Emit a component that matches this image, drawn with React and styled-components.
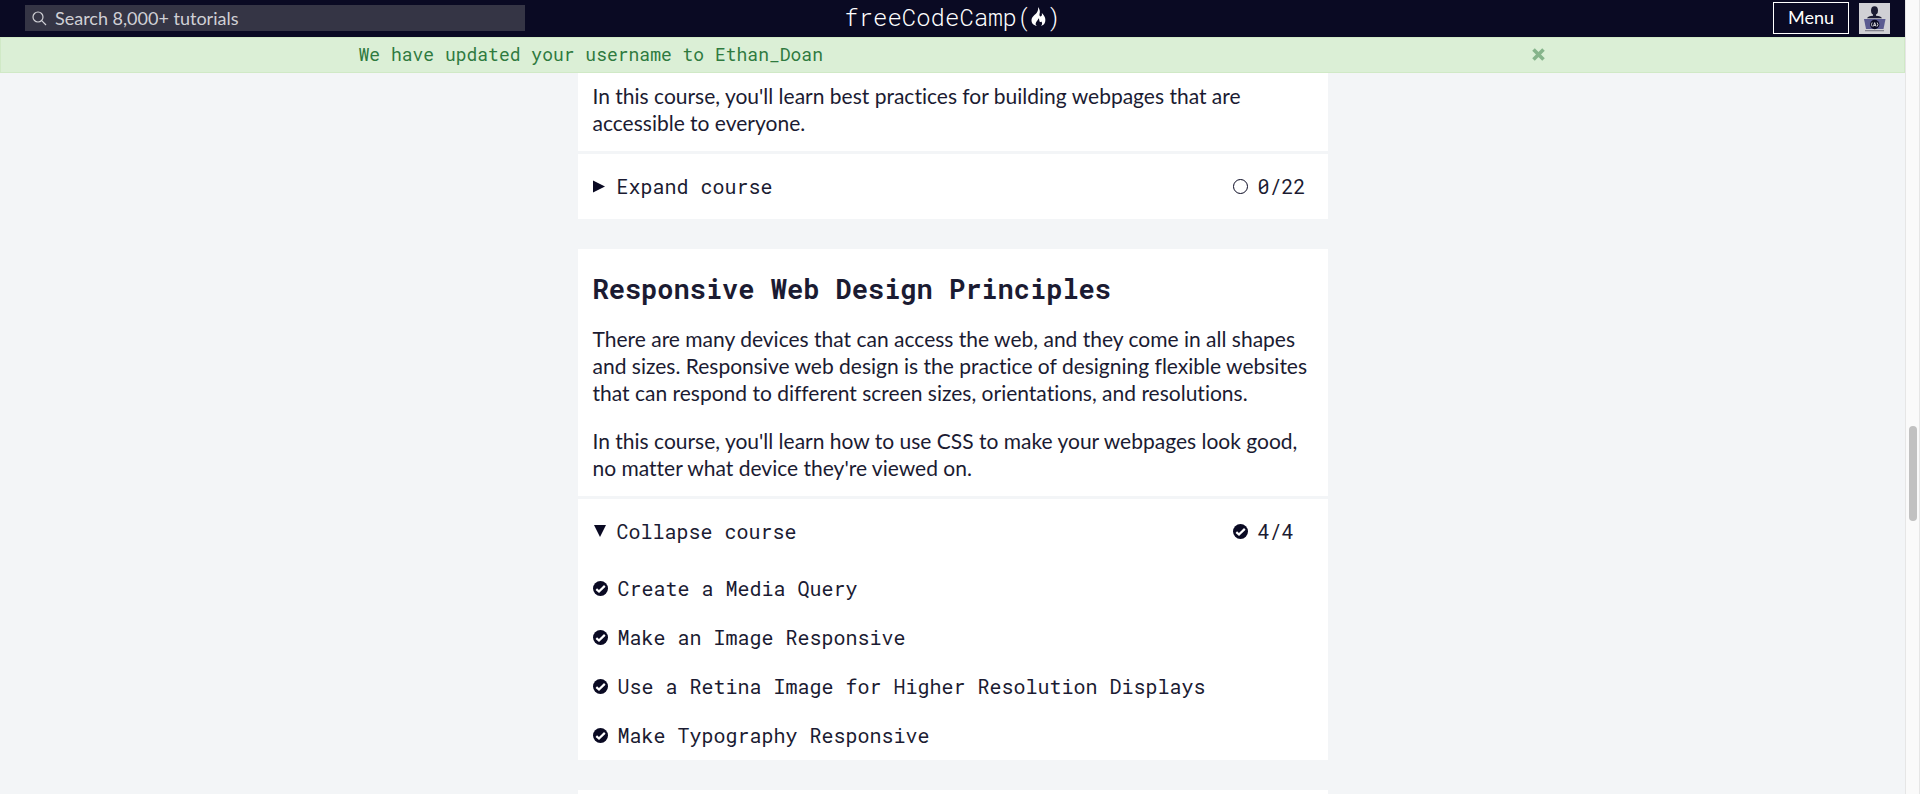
import React, { useState } from "react";
import styled, { createGlobalStyle } from "styled-components";

const mono = '"Roboto Mono", "DejaVu Sans Mono", monospace';
const sans = 'Lato, "Liberation Sans", sans-serif';

const GlobalStyle = createGlobalStyle`
  *, *::before, *::after { box-sizing: border-box; }
  html, body, #root { height: 100%; }
  body {
    margin: 0;
    overflow: hidden;
    background: #f3f5f7;
    color: #1b1b32;
    font: 20px/27px ${sans};
  }
  button, input { font: inherit; }
`;

const Window = styled.div`
  display: flex;
  height: 100vh;
`;

const Page = styled.div`
  flex: 1;
  min-width: 0;
  overflow: hidden;
`;

const ScrollTrack = styled.div`
  flex: none;
  display: flex;
  flex-direction: column;
  align-items: center;
  width: 15px;
  background: #fafafa;
  border: solid #e6e6e6;
  border-width: 0 1px;
`;

const ScrollSpace = styled.div`
  flex: ${(p) => p.$share} 1 0;
`;

const ScrollThumb = styled.div`
  flex: 95 1 0;
  width: 8px;
  border-radius: 4px;
  background: #c1c1c1;
`;

const Header = styled.header`
  display: grid;
  grid-template-columns: 1fr auto 1fr;
  align-items: center;
  height: 37px;
  padding: 0 15px 1px;
  background: #0a0a23;
`;

const SearchBox = styled.form`
  display: flex;
  align-items: center;
  gap: 8px;
  width: 500px;
  max-width: 100%;
  height: 26px;
  margin-left: 10px;
  padding: 0 7px;
  background: #353545;
  color: #d0d0d5;
  font-size: 18px;
`;

const SearchInput = styled.input`
  flex: 1;
  min-width: 0;
  height: 26px;
  padding: 0;
  border: 0;
  outline: 0;
  background: transparent;
  color: inherit;
  &::placeholder { color: inherit; opacity: 1; }
`;

const Brand = styled.a`
  display: flex;
  align-items: center;
  padding-bottom: 3px;
  color: #fff;
  font: 300 24px/32px ${mono};
  text-decoration: none;
`;

const HeaderActions = styled.nav`
  display: flex;
  align-items: center;
  justify-content: flex-end;
  gap: 10px;
`;

const MenuButton = styled.button`
  width: 76px;
  height: 32px;
  padding: 0 0 2px;
  border: 1px solid #fff;
  background: transparent;
  color: #fff;
  font-size: 18px;
  line-height: 28px;
`;

const AvatarLink = styled.a`
  display: block;
  width: 31px;
  height: 31px;
  background: #d0d0d5;
`;

const Alert = styled.div`
  display: flex;
  justify-content: center;
  height: 36px;
  padding-bottom: 2px;
  border: 1px solid #d0e9c6;
  background: #dbefd6;
  color: #2f7a3f;
  font: 18px/32px ${mono};
`;

const AlertContent = styled.div`
  flex: 0 1 1188px;
  display: flex;
  align-items: center;
  justify-content: space-between;
`;

const CloseButton = styled.button`
  display: flex;
  padding: 0 2px;
  border: 0;
  background: transparent;
  color: #86b48b;
`;

const Courses = styled.main`
  display: flex;
  flex-direction: column;
  gap: 30px;
  max-width: 750px;
  margin: 0 auto;
`;

const Course = styled.section`
  background: #fff;
`;

const CourseIntro = styled.div`
  display: flex;
  flex-direction: column;
  gap: 21px;
  padding: ${(p) => (p.$continued ? 9 : 25)}px 15px 15px;
  border-bottom: 3px solid #f3f5f7;
`;

const CourseTitle = styled.h2`
  margin: 0;
  font: bold 27px/30px ${mono};
`;

const Text = styled.p`
  margin: 0;
  font-size: 21px;
  font-variant-ligatures: none;
`;

const CourseToggle = styled.button`
  display: grid;
  grid-template-columns: 1fr 80px;
  align-items: center;
  width: 100%;
  height: 65px;
  padding: 0 15px;
  border: 0;
  background: transparent;
  color: inherit;
  font-family: ${mono};
  text-align: left;
`;

const IconLabel = styled.span`
  display: flex;
  align-items: center;
  gap: 10px;
  svg { flex: none; }
`;

const Lessons = styled.ul`
  margin: 0;
  padding: 0;
  list-style: none;
  font-family: ${mono};
`;

const Lesson = styled.li`
  display: flex;
  align-items: center;
  height: 49px;
  padding: 0 15px;
`;

const LessonLink = styled.a`
  color: inherit;
  text-decoration: none;
`;

const SearchIcon = () => (
  <svg width="15" height="15" viewBox="0 0 15 15" fill="none" stroke="currentColor" strokeWidth="1.2" aria-hidden="true">
    <circle cx="6" cy="6" r="5" />
    <path d="M9.7 9.7 14 14" />
  </svg>
);

const FlameIcon = () => (
  <svg width="15" height="20" viewBox="0 0 15 20" fill="currentColor" aria-hidden="true">
    <path d="M7 0C8.500 2 9.500 4 8.500 7C8.200 9 9.200 10 10.400 9C11.300 8 10.900 6.600 10.700 6C13 8 15 11 14.200 14.500C13.700 17 12.200 18.300 10 19C11.500 17.500 11.400 15.500 10.300 14.500C9.500 15.500 8.500 15.200 8.400 14C8.300 13 8.300 12 7.300 11.200C7.500 13 5 14.300 4.700 16.200C4.500 17.500 5 18.500 6 19C3 18.500.5 16.500.5 13.500C.5 9.500 4.500 8 6.300 4.800C7.200 3 7.300 1.500 7 0Z" />
  </svg>
);

const Avatar = () => (
  <svg width="31" height="31" viewBox="0 0 31 31" aria-hidden="true">
    <ellipse cx="15.500" cy="7.500" rx="3.500" ry="4.300" fill="#1b1b32" />
    <path d="M14 11h3v1.700q5 .3 6 2.500H8q1-2.200 6-2.500Z" fill="#1b1b32" />
    <path d="M5 16h21.500l-2 10H7Z" fill="#5a5a91" />
    <path d="M6 27h19v1.300H6Z" fill="#858591" />
    <circle cx="15.700" cy="21.500" r="4.700" fill="#0a0a23" />
    <path d="M13.200 19.500q-1.500 2 0 4M18.200 19.500q1.500 2 0 4M14.400 23.400l1.300-3.800 1.300 3.800M15 22.400h1.600" fill="none" stroke="#fff" strokeWidth=".8" />
  </svg>
);

const CloseIcon = () => (
  <svg width="13" height="13" viewBox="0 0 13 13" stroke="currentColor" strokeWidth="3.600" aria-hidden="true">
    <path d="M1.500 1.500l10 10M11.500 1.500l-10 10" />
  </svg>
);

const Triangle = ({ open }) => (
  <svg width="14" height="15" viewBox="0 0 14 15" fill="#0a0a23" aria-hidden="true">
    <path d={open ? "M1 1h12L7 13Z" : "M0 1.500 12 7.500 0 13.500Z"} />
  </svg>
);

const StatusIcon = ({ done }) => (
  <svg width="15" height="15" viewBox="0 0 15 15" role="img" aria-label={done ? "Passed" : "Not passed"}>
    <circle cx="7.500" cy="7.500" r={done ? 7.500 : 7} fill={done ? "#0a0a23" : "none"} stroke={done ? "none" : "#0a0a23"} />
    {done && <path d="M3.300 8.100 6 10.500 11.800 4.900" fill="none" stroke="#fff" strokeWidth="2.200" />}
  </svg>
);

function CourseBlock({ title, paragraphs, done, total, lessons = [], initiallyOpen = false }) {
  const [open, setOpen] = useState(initiallyOpen);
  return (
    <Course>
      <CourseIntro $continued={!title}>
        {title && <CourseTitle>{title}</CourseTitle>}
        {paragraphs.map((p) => (
          <Text key={p}>{p}</Text>
        ))}
      </CourseIntro>
      <CourseToggle type="button" aria-expanded={open} onClick={() => setOpen(!open)}>
        <IconLabel>
          <Triangle open={open} />
          {open ? "Collapse course" : "Expand course"}
        </IconLabel>
        <IconLabel>
          <StatusIcon done={done === total} />
          {done}/{total}
        </IconLabel>
      </CourseToggle>
      {open && (
        <Lessons>
          {lessons.map((name) => (
            <Lesson key={name}>
              <LessonLink href="#">
                <IconLabel>
                  <StatusIcon done />
                  {name}
                </IconLabel>
              </LessonLink>
            </Lesson>
          ))}
        </Lessons>
      )}
    </Course>
  );
}

export default function App() {
  return (
    <Window>
      <GlobalStyle />
      <Page>
        <Header>
          <SearchBox role="search">
            <SearchIcon />
            <SearchInput type="text" aria-label="Search" placeholder="Search 8,000+ tutorials" />
          </SearchBox>
          <Brand href="#">
            freeCodeCamp(
            <FlameIcon />)
          </Brand>
          <HeaderActions>
            <MenuButton type="button">Menu</MenuButton>
            <AvatarLink href="#" aria-label="Profile">
              <Avatar />
            </AvatarLink>
          </HeaderActions>
        </Header>
        <Alert role="status">
          <AlertContent>
            We have updated your username to Ethan_Doan
            <CloseButton type="button" aria-label="Close">
              <CloseIcon />
            </CloseButton>
          </AlertContent>
        </Alert>
        <Courses>
          <CourseBlock
            paragraphs={["In this course, you'll learn best practices for building webpages that are accessible to everyone."]}
            done={0}
            total={22}
          />
          <CourseBlock
            title="Responsive Web Design Principles"
            paragraphs={[
              "There are many devices that can access the web, and they come in all shapes and sizes. Responsive web design is the practice of designing flexible websites that can respond to different screen sizes, orientations, and resolutions.",
              "In this course, you'll learn how to use CSS to make your webpages look good, no matter what device they're viewed on.",
            ]}
            done={4}
            total={4}
            initiallyOpen
            lessons={[
              "Create a Media Query",
              "Make an Image Responsive",
              "Use a Retina Image for Higher Resolution Displays",
              "Make Typography Responsive",
            ]}
          />
          <Course>
            <CourseIntro />
          </Course>
        </Courses>
      </Page>
      <ScrollTrack>
        <ScrollSpace $share={426} />
        <ScrollThumb />
        <ScrollSpace $share={273} />
      </ScrollTrack>
    </Window>
  );
}
